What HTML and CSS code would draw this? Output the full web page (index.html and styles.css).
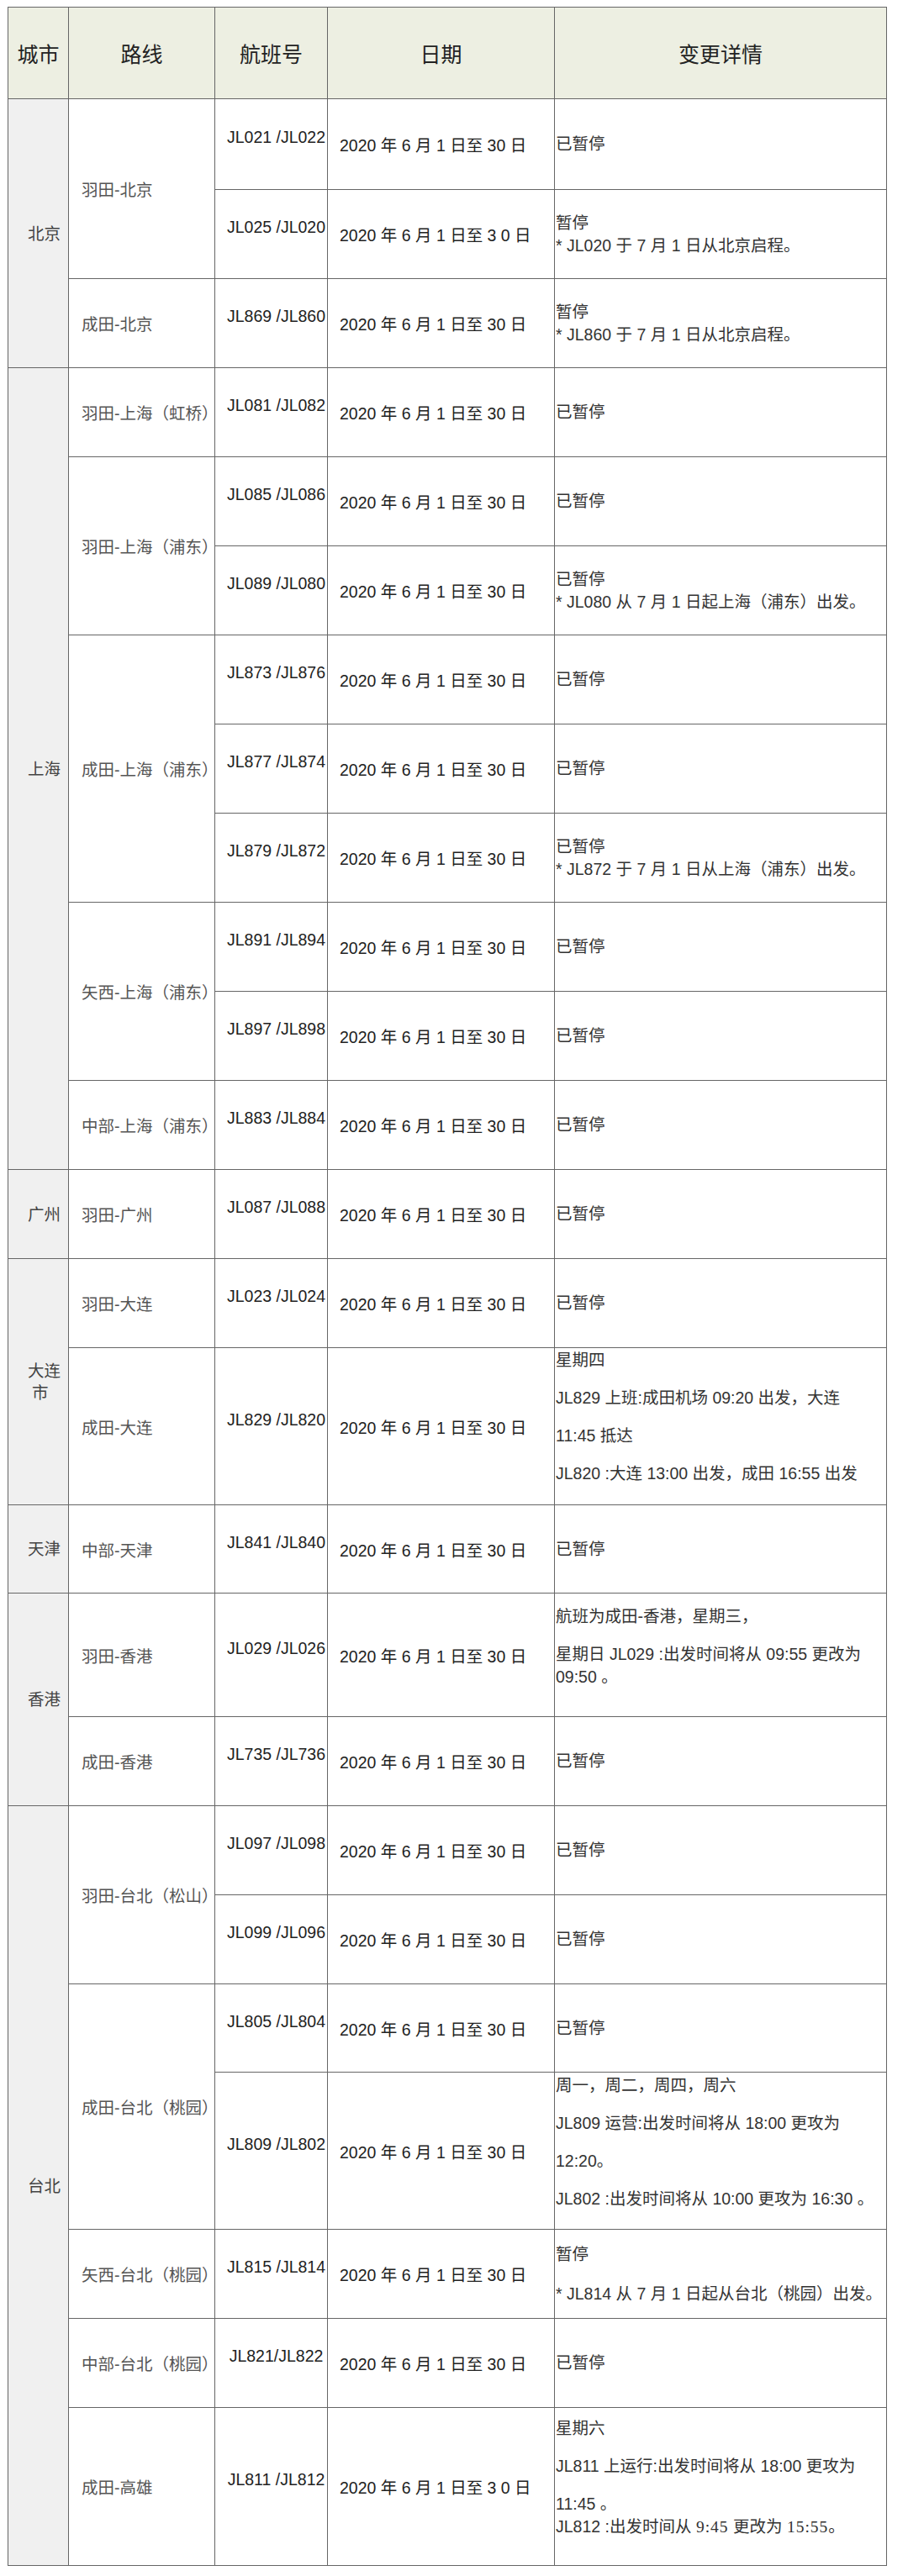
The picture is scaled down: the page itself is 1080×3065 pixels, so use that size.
FILE: index.html
```html
<!DOCTYPE html>
<html lang="zh-CN">
<head>
<meta charset="utf-8">
<title>航班变更</title>
<link rel="stylesheet" href="styles.css">
</head>
<body>
<table class="sched">
<colgroup><col class="c-city"><col class="c-route"><col class="c-flight"><col class="c-date"><col class="c-detail"></colgroup>
<thead>
<tr class="r-head"><th>城市</th><th>路线</th><th>航班号</th><th>日期</th><th>变更详情</th></tr>
</thead>
<tbody>
<tr class="r-first">
<td class="city" rowspan="3">北京</td>
<td class="route" rowspan="2">羽田-北京</td>
<td class="flight">JL021 /JL022</td><td class="date">2020 年 6 月 1 日至 30 日</td><td class="detail">已暂停</td></tr>
<tr class="r-n"><td class="flight">JL025 /JL020</td><td class="date">2020 年 6 月 1 日至 3 0 日</td><td class="detail"><div>暂停</div><div>* JL020 于 7 月 1 日从北京启程。</div></td></tr>
<tr class="r-n"><td class="route">成田-北京</td><td class="flight">JL869 /JL860</td><td class="date">2020 年 6 月 1 日至 30 日</td><td class="detail"><div>暂停</div><div>* JL860 于 7 月 1 日从北京启程。</div></td></tr>

<tr class="r-n">
<td class="city" rowspan="9">上海</td>
<td class="route">羽田-上海（虹桥）</td>
<td class="flight">JL081 /JL082</td><td class="date">2020 年 6 月 1 日至 30 日</td><td class="detail">已暂停</td></tr>
<tr class="r-n"><td class="route" rowspan="2">羽田-上海（浦东）</td><td class="flight">JL085 /JL086</td><td class="date">2020 年 6 月 1 日至 30 日</td><td class="detail">已暂停</td></tr>
<tr class="r-n"><td class="flight">JL089 /JL080</td><td class="date">2020 年 6 月 1 日至 30 日</td><td class="detail"><div>已暂停</div><div>* JL080 从 7 月 1 日起上海（浦东）出发。</div></td></tr>
<tr class="r-n"><td class="route" rowspan="3">成田-上海（浦东）</td><td class="flight">JL873 /JL876</td><td class="date">2020 年 6 月 1 日至 30 日</td><td class="detail">已暂停</td></tr>
<tr class="r-n"><td class="flight">JL877 /JL874</td><td class="date">2020 年 6 月 1 日至 30 日</td><td class="detail">已暂停</td></tr>
<tr class="r-n"><td class="flight">JL879 /JL872</td><td class="date">2020 年 6 月 1 日至 30 日</td><td class="detail"><div>已暂停</div><div>* JL872 于 7 月 1 日从上海（浦东）出发。</div></td></tr>
<tr class="r-n"><td class="route" rowspan="2">矢西-上海（浦东）</td><td class="flight">JL891 /JL894</td><td class="date">2020 年 6 月 1 日至 30 日</td><td class="detail">已暂停</td></tr>
<tr class="r-n"><td class="flight">JL897 /JL898</td><td class="date">2020 年 6 月 1 日至 30 日</td><td class="detail">已暂停</td></tr>
<tr class="r-n"><td class="route">中部-上海（浦东）</td><td class="flight">JL883 /JL884</td><td class="date">2020 年 6 月 1 日至 30 日</td><td class="detail">已暂停</td></tr>

<tr class="r-n">
<td class="city">广州</td>
<td class="route">羽田-广州</td>
<td class="flight">JL087 /JL088</td><td class="date">2020 年 6 月 1 日至 30 日</td><td class="detail">已暂停</td></tr>

<tr class="r-n">
<td class="city city-wrap" rowspan="2">大连<br><span class="city-tail">市</span></td>
<td class="route">羽田-大连</td>
<td class="flight">JL023 /JL024</td><td class="date">2020 年 6 月 1 日至 30 日</td><td class="detail">已暂停</td></tr>
<tr class="r-tall"><td class="route">成田-大连</td><td class="flight">JL829 /JL820</td><td class="date">2020 年 6 月 1 日至 30 日</td>
<td class="detail detail-top pt-dl"><div class="para">星期四</div><div class="para">JL829 上班:成田机场 09:20 出发，大连</div><div class="para">11:45 抵达</div><div class="para">JL820 :大连 13:00 出发，成田 16:55 出发</div></td></tr>

<tr class="r-short">
<td class="city">天津</td>
<td class="route">中部-天津</td>
<td class="flight">JL841 /JL840</td><td class="date">2020 年 6 月 1 日至 30 日</td><td class="detail">已暂停</td></tr>

<tr class="r-hk">
<td class="city" rowspan="2">香港</td>
<td class="route">羽田-香港</td>
<td class="flight">JL029 /JL026</td><td class="date">2020 年 6 月 1 日至 30 日</td>
<td class="detail detail-top pt-hk"><div class="para">航班为成田-香港，星期三，</div><div class="para">星期日 JL029 :出发时间将从 09:55 更改为</div><div>09:50 。</div></td></tr>
<tr class="r-n"><td class="route">成田-香港</td><td class="flight">JL735 /JL736</td><td class="date">2020 年 6 月 1 日至 30 日</td><td class="detail">已暂停</td></tr>

<tr class="r-n">
<td class="city" rowspan="7">台北</td>
<td class="route" rowspan="2">羽田-台北（松山）</td>
<td class="flight">JL097 /JL098</td><td class="date">2020 年 6 月 1 日至 30 日</td><td class="detail">已暂停</td></tr>
<tr class="r-n"><td class="flight">JL099 /JL096</td><td class="date">2020 年 6 月 1 日至 30 日</td><td class="detail">已暂停</td></tr>
<tr class="r-short"><td class="route" rowspan="2">成田-台北（桃园）</td><td class="flight">JL805 /JL804</td><td class="date">2020 年 6 月 1 日至 30 日</td><td class="detail">已暂停</td></tr>
<tr class="r-tall"><td class="flight">JL809 /JL802</td><td class="date">2020 年 6 月 1 日至 30 日</td>
<td class="detail detail-top pt-tp"><div class="para">周一，周二，周四，周六</div><div class="para">JL809 运营:出发时间将从 18:00 更攻为</div><div class="para">12:20。</div><div class="para">JL802 :出发时间将从 10:00 更攻为 16:30 。</div></td></tr>
<tr class="r-n"><td class="route">矢西-台北（桃园）</td><td class="flight">JL815 /JL814</td><td class="date">2020 年 6 月 1 日至 30 日</td>
<td class="detail"><div class="para wide">暂停</div><div class="para wide">* JL814 从 7 月 1 日起从台北（桃园）出发。</div></td></tr>
<tr class="r-n"><td class="route">中部-台北（桃园）</td><td class="flight">JL821/JL822</td><td class="date">2020 年 6 月 1 日至 30 日</td><td class="detail">已暂停</td></tr>
<tr class="r-last"><td class="route">成田-高雄</td><td class="flight">JL811 /JL812</td><td class="date">2020 年 6 月 1 日至 3 0 日</td>
<td class="detail detail-top pt-kh"><div class="para">星期六</div><div class="para">JL811 上运行:出发时间将从 18:00 更攻为</div><div class="para">11:45 。</div><div>JL812 :出发时间从 <span class="serif">9:45</span> 更改为 <span class="serif">15:55</span>。</div></td></tr>
</tbody>
</table>
</body>
</html>
```

FILE: styles.css
```css
html, body {
  margin: 0;
  padding: 0;
  background: #ffffff;
}

body {
  font-family: "Liberation Sans", "Noto Sans CJK SC", sans-serif;
  font-size: 19.5px;
  color: #222;
}

.sched {
  border-collapse: collapse;
  table-layout: fixed;
  width: 1045px;
  margin: 8px 0 0 9px;
}

.c-city { width: 72px; }
.c-route { width: 174px; }
.c-flight { width: 134px; }
.c-date { width: 270px; }
.c-detail { width: 395px; }

.sched th,
.sched td {
  border: 1px solid #666;
  padding: 0;
  vertical-align: middle;
  font-weight: normal;
}

.sched th {
  background: #edefe2;
  font-size: 25px;
  color: #222;
  text-align: center;
}

.r-head { height: 109px; }
.r-first { height: 108px; }
.r-n { height: 106px; }
.r-short { height: 105px; }
.r-tall { height: 187px; }
.r-hk { height: 147px; }
.r-last { height: 188px; }

.city {
  background: #f0f0f0;
  color: #444;
  padding-left: 23px !important;
  line-height: 26px;
  text-align: left;
}

.city-tail {
  padding-left: 5px;
}

.route {
  color: #555;
  padding-left: 15px !important;
  white-space: nowrap;
}

.flight {
  color: #222;
  text-align: center;
  padding: 0 0 16px 12px !important;
  white-space: nowrap;
}

.date {
  color: #222;
  padding-left: 14px !important;
  white-space: nowrap;
}

.detail {
  color: #333;
  padding-left: 1px !important;
  line-height: 27px;
  white-space: nowrap;
}

.detail-top {
  vertical-align: top !important;
}

.para + .para {
  margin-top: 18px;
}

.para.wide + .para.wide {
  margin-top: 20px;
}

.pt-dl { padding-top: 1px !important; }
.pt-hk { padding-top: 14px !important; }
.pt-tp { padding-top: 2px !important; }
.pt-kh { padding-top: 11px !important; }

.serif {
  font-family: "Liberation Serif", "Noto Sans CJK SC", serif;
  letter-spacing: 1px;
}
```
